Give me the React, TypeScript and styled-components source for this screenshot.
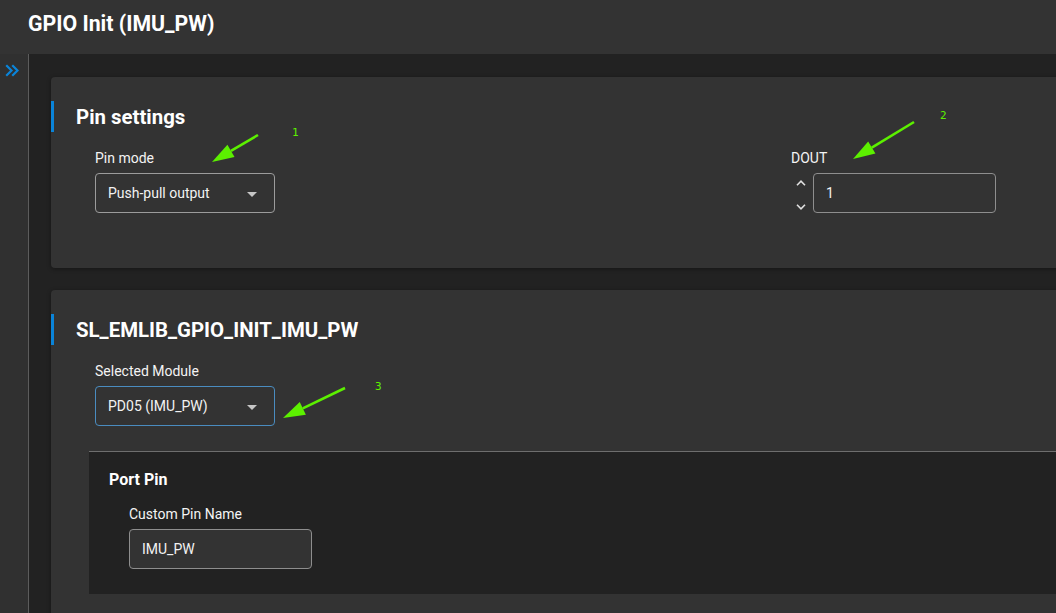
import React from 'react';
import styled, { createGlobalStyle } from 'styled-components';

const GlobalStyle = createGlobalStyle`
  html, body {
    margin: 0;
    height: 100%;
    overflow: hidden;
    background: #222;
  }

  body {
    font-family: Roboto, "Liberation Sans", Arial, sans-serif;
    color: #f2f2f2;
  }
`;

const ACCENT = '#0a84d9';
const MARK = '#5cf000';

type Arrow = { from: [number, number]; to: [number, number]; label: string; at: [number, number] };

const arrows: Arrow[] = [
  { from: [258, 135], to: [212, 162], label: '1', at: [292, 126] },
  { from: [914, 122], to: [853, 159], label: '2', at: [940, 109] },
  { from: [345, 388], to: [283, 418], label: '3', at: [375, 380] }
];

const head = (a: Arrow, len = 22, half = 7) => {
  const [x1, y1] = a.from;
  const [x2, y2] = a.to;
  const d = Math.hypot(x2 - x1, y2 - y1);
  const ux = (x2 - x1) / d;
  const uy = (y2 - y1) / d;
  const bx = x2 - ux * len;
  const by = y2 - uy * len;
  const points = `${x2},${y2} ${bx - uy * half},${by + ux * half} ${bx + uy * half},${by - ux * half}`;
  return { bx, by, points };
};

const App: React.FC = () => (
  <Page>
    <GlobalStyle />
    <Header>
      <PageTitle>GPIO Init (IMU_PW)</PageTitle>
    </Header>
    <Body>
      <Sidebar>
        <svg width="14" height="13" viewBox="0 0 14 13" fill="none" stroke={ACCENT} strokeWidth="2.2" strokeLinecap="square">
          <polyline points="2,2 6.5,6.5 2,11" />
          <polyline points="8,2 12.5,6.5 8,11" />
        </svg>
      </Sidebar>
      <Main>
        <Card>
          <SectionTitle>Pin settings</SectionTitle>
          <FieldGrid>
            <Field>
              <Label>Pin mode</Label>
              <Select>
                <span>Push-pull output</span>
                <Caret />
              </Select>
            </Field>
            <Field>
              <Label>DOUT</Label>
              <NumberRow>
                <Stepper>
                  <svg width="10" height="6" viewBox="0 0 10 6" fill="none" stroke="#e0e0e0" strokeWidth="1.6">
                    <polyline points="1,5.2 5,1.2 9,5.2" />
                  </svg>
                  <svg width="10" height="6" viewBox="0 0 10 6" fill="none" stroke="#e0e0e0" strokeWidth="1.6">
                    <polyline points="1,0.8 5,4.8 9,0.8" />
                  </svg>
                </Stepper>
                <TextInput>1</TextInput>
              </NumberRow>
            </Field>
          </FieldGrid>
        </Card>

        <Card>
          <SectionTitle>SL_EMLIB_GPIO_INIT_IMU_PW</SectionTitle>
          <FieldGrid>
            <Field>
              <Label>Selected Module</Label>
              <Select focused>
                <span>PD05 (IMU_PW)</span>
                <Caret />
              </Select>
            </Field>
          </FieldGrid>
          <SubPanel>
            <SubTitle>Port Pin</SubTitle>
            <SubFields>
              <Field>
                <Label>Custom Pin Name</Label>
                <TextInput>IMU_PW</TextInput>
              </Field>
            </SubFields>
          </SubPanel>
        </Card>
      </Main>
    </Body>

    <Overlay width="1056" height="613" viewBox="0 0 1056 613">
      {arrows.map(a => {
        const h = head(a);
        return (
          <g key={a.label}>
            <line x1={a.from[0]} y1={a.from[1]} x2={h.bx} y2={h.by} stroke={MARK} strokeWidth="2.6" />
            <polygon points={h.points} fill={MARK} />
          </g>
        );
      })}
    </Overlay>
    {arrows.map(a => (
      <Callout key={a.label} style={{ left: a.at[0], top: a.at[1] }}>{a.label}</Callout>
    ))}
  </Page>
);

const Page = styled.div`
  position: relative;
  display: flex;
  flex-direction: column;
  height: 613px;
  overflow: hidden;
`;

const Header = styled.header`
  flex: none;
  height: 54px;
  box-sizing: border-box;
  padding: 11px 28px 0;
  background: #333;
`;

const PageTitle = styled.h1`
  margin: 0;
  font-size: 21.3px;
  line-height: 26px;
  font-weight: 700;
  color: #fff;
`;

const Body = styled.div`
  flex: 1;
  display: flex;
  min-height: 0;
`;

const Sidebar = styled.aside`
  flex: none;
  width: 29px;
  box-sizing: border-box;
  padding: 8px 0 0 5px;
  background: #303030;
  border-right: 1px solid #5c5c5c;
`;

const Main = styled.main`
  flex: 1;
  display: flex;
  flex-direction: column;
  gap: 22px;
  padding: 23px 0 0 22px;
  margin-right: -16px;
`;

const Card = styled.section`
  flex: none;
  background: #333;
  border-radius: 4px;
  box-shadow: 0 1px 4px rgba(0, 0, 0, 0.4);
  padding: 24px 0 55px;
`;

const SectionTitle = styled.h2`
  margin: 0;
  height: 31px;
  box-sizing: border-box;
  padding: 2px 0 0 22px;
  border-left: 3px solid ${ACCENT};
  font-size: 20.4px;
  line-height: 29px;
  font-weight: 700;
  color: #fff;
`;

const FieldGrid = styled.div`
  display: grid;
  grid-template-columns: 696px 1fr;
  margin-top: 16px;
  padding-left: 44px;
`;

const Field = styled.div`
  display: flex;
  flex-direction: column;
  align-items: flex-start;
  gap: 5px;
`;

const Label = styled.label`
  font-size: 14px;
  line-height: 20px;
  color: #f4f4f4;
`;

const Select = styled.div<{ focused?: boolean }>`
  width: 180px;
  height: 40px;
  box-sizing: border-box;
  display: flex;
  align-items: center;
  justify-content: space-between;
  padding: 0 17px 0 12px;
  border: 1px solid ${p => (p.focused ? '#4a8cc0' : '#9c9c9c')};
  border-radius: 4px;
  font-size: 14px;
  color: #f2f2f2;
`;

const Caret = styled.i`
  width: 0;
  height: 0;
  border-left: 5px solid transparent;
  border-right: 5px solid transparent;
  border-top: 5px solid #c6c6c6;
  margin-top: 2px;
`;

const NumberRow = styled.div`
  display: flex;
`;

const Stepper = styled.div`
  width: 20px;
  margin-right: 2px;
  display: flex;
  flex-direction: column;
  align-items: center;
  justify-content: space-between;
  padding: 7px 0 3px;
  box-sizing: border-box;
`;

const TextInput = styled.div`
  width: 183px;
  height: 40px;
  box-sizing: border-box;
  display: flex;
  align-items: center;
  padding-left: 12px;
  background: #333;
  border: 1px solid #8e8e8e;
  border-radius: 4px;
  font-size: 14px;
  color: #f2f2f2;
`;

const SubPanel = styled.div`
  margin: 25px 0 0 38px;
  padding: 18px 20px 25px;
  background: #222;
  border-top: 1px solid #6e6e6e;
`;

const SubTitle = styled.h3`
  margin: 0;
  font-size: 16px;
  line-height: 20px;
  font-weight: 700;
  color: #fff;
`;

const SubFields = styled.div`
  margin-top: 14px;
  padding-left: 20px;
`;

const Overlay = styled.svg`
  position: absolute;
  left: 0;
  top: 0;
  pointer-events: none;
`;

const Callout = styled.span`
  position: absolute;
  font-family: "DejaVu Sans Mono", "Liberation Mono", monospace;
  font-size: 11px;
  line-height: 14px;
  color: ${MARK};
  pointer-events: none;
`;

export default App;
